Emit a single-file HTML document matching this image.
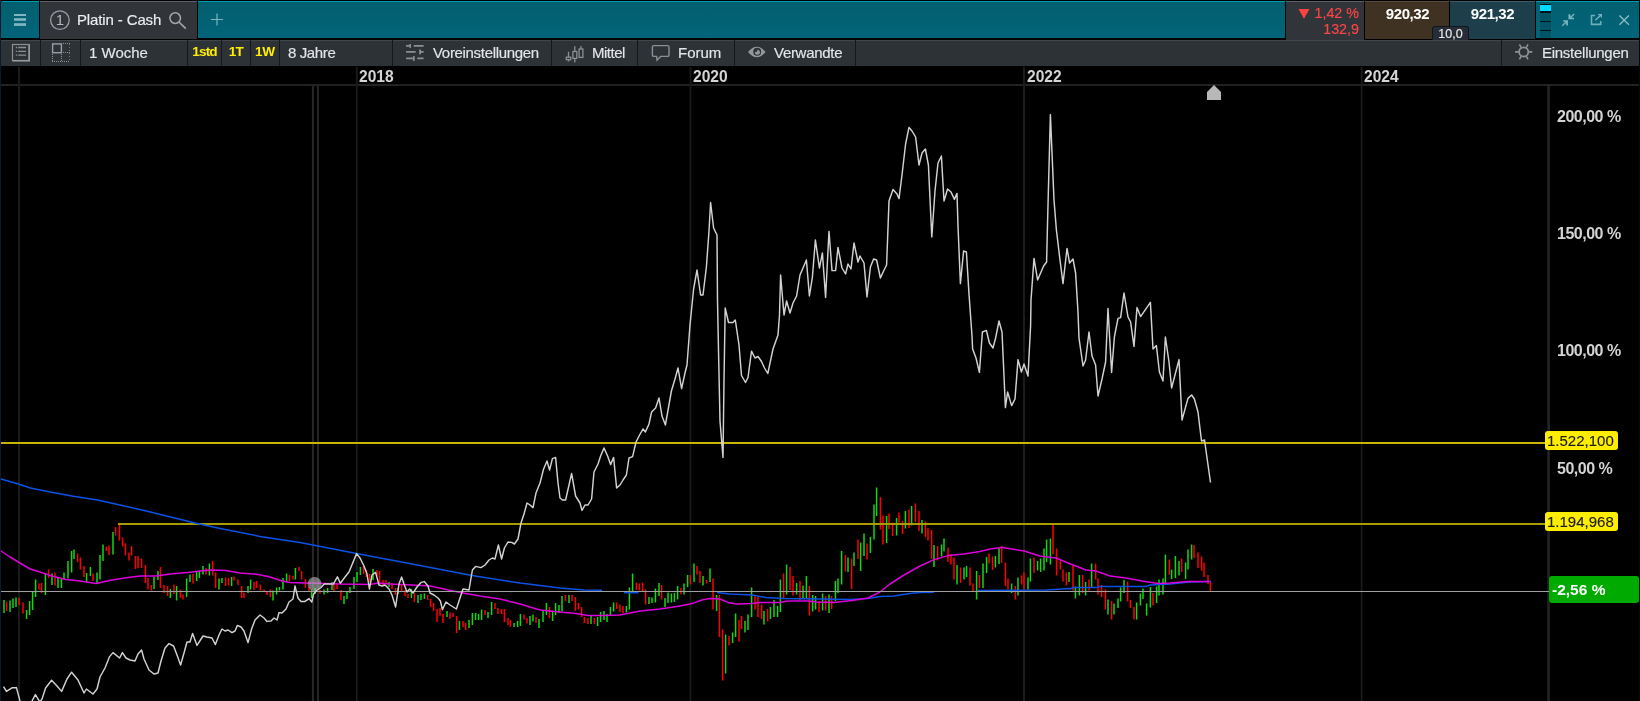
<!DOCTYPE html>
<html lang="de"><head><meta charset="utf-8"><title>Platin - Cash</title>
<style>
html,body{margin:0;padding:0;background:#000;}
body{width:1640px;height:701px;position:relative;overflow:hidden;font-family:"Liberation Sans",sans-serif;font-size:15px;color:#e4e6e8;}
.abs{position:absolute;box-sizing:border-box;}
.abs,.tag{will-change:transform;-webkit-text-stroke:0.15px currentColor;}
.lbl{will-change:transform;}
.chart{position:absolute;left:0;top:0;}
.teal{background:linear-gradient(#025f6e,#03647a);border-top:1px solid #0097b2;}
.dk{background:#31353a;border-top:1px solid #596169;}
.row2{background:#2d3237;border-top:1px solid #41464b;}
.cell{position:absolute;top:40px;height:26px;box-sizing:border-box;background:#2d3237;border-top:1px solid #41464b;white-space:nowrap;line-height:25px;}
.cell span{position:absolute;top:0;}
.y{color:#ffee00;font-weight:bold;font-size:13.6px;text-align:center;-webkit-text-stroke:0 !important;}
.lbl{position:absolute;font-weight:bold;color:#d4d4d4;font-size:15.6px;line-height:16px;white-space:nowrap;}
.ax{font-size:16px;letter-spacing:-0.5px;}
.tag{position:absolute;background:#ffee00;color:#1c1c1c;border-radius:3px;font-size:15px;line-height:19px;height:19px;box-sizing:border-box;white-space:nowrap;}
svg.ic{position:absolute;overflow:visible;}
</style></head><body>
<svg class="chart" width="1640" height="701" viewBox="0 0 1640 701">
<g fill="#222222" shape-rendering="crispEdges">
<rect x="1" y="84" width="1638" height="2"/>

</g>
<rect x="1547.3" y="86" width="2.6" height="615" fill="#232323"/>
<g fill="#1b1b1b">
<rect x="18" y="67" width="2.0" height="634"/>
<rect x="355.9" y="67" width="1.8" height="634"/>
<rect x="689.6" y="67" width="1.7" height="634"/>
<rect x="1023" y="67" width="2.0" height="634"/>
<rect x="1360.8" y="67" width="1.7" height="634"/>
</g>
<g fill="#282828"><rect x="311.900" y="86" width="2" height="615"/><rect x="317.100" y="86" width="1.800" height="615"/></g>
<g stroke-width="1.5" fill="none">
<path stroke="#12d812" d="M4.0 600.0V613.0M10.0 600.4V612.0M13.0 598.4V608.0M16.0 597.6V607.0M26.6 610.0V619.0M29.6 601.0V615.0M32.6 592.0V610.0M35.6 579.6V597.0M45.4 573.6V595.0M52.0 573.6V585.0M58.0 577.0V588.0M61.4 578.0V588.0M64.0 572.4V579.6M68.0 561.0V578.4M71.6 551.0V572.4M74.0 549.6V559.0M86.6 573.0V582.0M90.4 567.0V576.0M97.0 572.4V584.0M100.0 555.0V579.6M103.0 544.4V561.0M113.0 532.0V554.4M154.0 577.0V589.0M158.0 571.0V580.0M170.4 589.0V598.0M176.6 586.0V600.4M186.6 578.4V597.0M190.0 574.4V582.0M196.6 571.0V581.0M199.4 571.0V578.0M203.0 566.0V574.4M209.4 563.6V575.6M219.0 578.4V589.6M222.0 578.0V583.0M231.6 577.0V586.0M248.0 586.0V593.0M250.6 579.6V589.6M273.0 590.4V600.4M276.6 587.6V594.4M279.4 587.0V590.4M283.0 578.0V589.6M286.6 573.6V581.6M295.4 568.0V579.6M311.6 589.6V598.0M315.0 588.0V594.0M324.0 589.6V594.4M327.6 588.0V593.0M332.0 582.0V590.0M344.0 596.0V604.0M347.0 591.0V599.0M350.0 587.0V593.0M354.0 577.0V589.0M357.0 572.0V582.0M360.4 567.0V575.0M373.0 569.0V580.0M389.0 582.0V587.0M398.0 588.0V594.0M411.4 589.0V598.0M418.0 595.0V603.0M421.0 594.0V600.0M424.4 593.6V599.0M447.0 611.0V617.0M459.4 621.0V630.0M469.0 620.0V628.0M472.4 613.0V625.0M475.6 613.0V620.0M478.6 614.0V620.0M481.6 609.6V620.0M488.0 612.0V618.0M491.6 602.0V615.0M514.0 623.0V627.0M517.6 621.0V627.0M520.4 614.0V626.0M530.0 616.0V625.0M533.0 614.4V621.6M539.0 619.0V628.0M543.0 611.0V622.0M546.4 603.0V615.0M552.6 612.0V621.0M555.6 603.0V615.0M559.0 605.0V613.0M562.0 596.0V611.0M569.0 595.0V603.0M591.0 616.0V624.0M597.6 617.0V626.0M600.6 612.0V622.0M604.0 611.0V620.0M607.0 614.0V622.0M610.4 607.0V615.0M613.6 602.4V611.6M626.4 606.0V612.4M629.4 587.4V609.6M632.6 573.6V591.0M649.0 597.0V604.0M652.0 597.6V603.0M655.4 588.4V602.4M659.0 583.0V596.0M665.0 598.0V607.0M668.0 592.4V603.0M671.4 593.6V602.4M674.4 593.0V602.0M677.6 586.0V599.6M684.0 583.6V594.4M687.6 575.0V587.0M694.0 563.6V582.0M703.0 576.0V585.6M710.0 568.4V582.0M716.6 595.0V611.0M725.6 634.4V673.4M732.6 632.4V643.0M735.6 613.6V637.0M745.0 621.0V632.4M748.0 614.4V630.0M751.6 587.6V617.0M764.0 611.0V624.4M770.4 607.0V619.0M774.0 600.0V617.0M777.6 606.0V617.0M780.4 579.6V612.0M786.6 564.4V594.4M796.6 583.0V594.4M803.0 585.6V598.0M806.4 576.0V598.0M812.6 595.0V611.6M815.6 596.0V609.6M822.6 593.6V610.4M829.0 594.4V613.0M835.4 581.0V601.0M838.0 578.4V593.0M841.6 551.0V584.4M848.0 557.6V572.0M854.0 552.4V566.0M860.6 542.4V571.0M864.0 533.6V556.0M870.4 537.0V553.0M874.0 504.4V539.6M876.6 487.6V516.0M886.6 516.0V543.0M896.6 518.0V535.6M905.4 511.0V528.4M911.6 506.0V525.6M922.0 520.0V533.6M934.0 545.0V567.0M941.6 544.4V556.4M944.0 538.4V551.6M957.0 565.0V584.4M964.0 567.6V579.6M966.6 566.0V577.0M976.6 571.0V599.6M983.0 563.6V588.0M986.6 557.0V573.0M995.4 556.0V567.6M999.0 548.0V564.0M1011.6 583.6V593.0M1018.0 577.6V595.6M1028.0 577.6V589.6M1030.4 558.4V581.6M1037.6 561.0V570.4M1040.6 558.4V572.0M1044.0 548.4V570.4M1046.6 539.6V562.0M1050.4 538.4V564.4M1069.0 572.0V582.0M1075.4 586.4V598.4M1079.4 575.0V595.6M1085.6 582.0V595.6M1091.6 563.6V587.6M1108.0 599.6V614.4M1114.0 603.6V614.4M1118.0 598.4V608.0M1120.6 587.6V601.6M1124.0 580.0V593.0M1136.6 602.4V619.6M1140.4 593.6V605.6M1143.0 588.4V599.0M1146.6 603.6V615.6M1150.4 587.0V607.6M1156.6 586.4V603.0M1159.0 579.6V595.6M1163.0 578.4V594.4M1165.4 554.4V583.6M1171.6 569.6V579.0M1175.4 556.0V578.0M1179.0 561.0V575.6M1185.6 562.4V579.0M1188.0 549.6V569.6M1191.6 544.4V559.6"/>
<path stroke="#ff0000" d="M6.6 601.6V611.0M19.0 598.0V605.0M23.0 602.4V613.6M39.0 583.6V589.6M41.6 583.0V593.0M48.6 569.6V578.0M55.0 572.4V585.6M77.6 553.6V562.0M80.4 557.6V569.6M84.0 566.0V577.0M93.0 573.6V581.0M106.4 546.4V551.0M109.0 545.6V555.0M115.6 527.0V535.6M119.4 524.4V540.4M122.6 537.6V546.4M125.4 543.6V555.6M129.0 552.4V560.4M131.6 546.0V555.6M135.4 556.0V569.0M138.0 556.0V568.0M141.6 558.4V568.0M145.4 565.0V583.0M148.0 578.0V589.6M151.4 585.0V590.4M160.4 567.0V588.0M164.0 585.0V593.0M167.6 586.0V596.0M174.0 584.4V594.0M180.4 589.6V598.0M183.0 594.4V599.6M193.0 574.0V583.6M206.0 568.0V574.4M212.6 561.0V575.6M215.6 572.4V588.0M225.6 577.6V586.0M228.6 578.0V585.6M234.0 576.4V580.4M238.0 579.6V585.0M241.6 586.0V598.0M244.0 592.4V598.0M254.0 582.0V590.0M256.6 581.0V588.0M260.4 584.4V590.4M264.0 589.6V592.0M267.0 592.0V595.0M270.4 589.6V597.0M289.4 575.0V581.0M293.0 576.0V579.6M299.0 567.0V571.0M301.6 571.0V579.6M305.4 579.0V588.0M309.0 587.0V592.0M320.0 590.0V593.6M334.0 584.0V591.0M337.0 583.0V589.0M341.0 590.0V600.0M363.6 566.0V574.0M366.4 570.0V577.0M369.6 574.0V582.0M377.0 570.0V576.0M379.6 571.0V584.0M383.0 580.0V585.0M386.0 580.0V584.0M392.0 583.0V589.0M395.6 588.0V595.0M401.6 585.0V591.0M405.0 590.0V596.0M408.0 594.0V598.0M414.4 593.0V602.0M427.6 595.0V600.0M430.6 599.0V607.0M433.6 603.0V611.0M437.0 609.0V622.0M440.0 608.0V616.0M443.0 614.0V623.0M450.0 612.4V619.0M453.0 613.0V617.0M456.6 616.0V633.0M463.0 621.0V627.0M465.6 623.0V630.0M485.0 610.0V615.0M495.0 603.0V609.0M498.0 608.0V614.0M501.6 609.0V614.0M504.4 609.0V622.0M508.0 618.0V625.0M510.4 620.0V627.0M524.0 614.4V619.6M527.0 618.0V623.6M536.0 617.0V623.0M549.4 607.0V618.0M565.4 595.0V601.0M572.0 595.0V601.0M575.4 597.0V611.0M578.4 603.0V609.6M581.6 607.0V617.0M584.4 617.0V623.0M588.0 618.0V624.0M594.4 618.0V624.0M616.6 602.4V609.0M620.0 604.4V612.0M623.0 606.0V613.0M636.4 582.4V590.0M639.4 583.6V590.4M642.6 582.4V592.0M645.6 589.6V604.4M661.6 585.0V599.6M681.0 588.0V594.4M690.4 575.0V584.4M697.0 566.0V574.4M700.0 571.0V583.0M706.6 580.0V583.6M713.0 578.4V609.6M719.4 595.0V637.0M722.6 629.6V680.6M729.0 636.0V645.6M739.0 620.0V641.6M741.6 616.0V629.0M755.0 595.0V609.6M758.0 597.0V617.0M761.6 604.4V619.0M767.6 609.0V621.6M783.6 573.6V598.0M790.0 567.0V590.0M793.0 576.0V595.6M800.0 581.0V600.0M809.4 586.0V615.6M819.0 601.0V612.0M825.6 596.0V610.4M831.6 596.0V609.0M845.4 555.0V571.6M851.6 558.4V589.0M858.0 539.6V559.0M867.0 543.6V559.6M880.4 497.0V529.6M883.0 515.6V544.4M889.0 513.6V529.0M892.6 522.4V536.0M899.0 512.4V522.4M902.6 521.0V534.0M909.0 509.6V528.0M915.4 503.6V522.0M919.0 511.0V531.0M925.4 521.6V537.0M928.0 528.0V540.4M931.6 530.0V559.0M937.6 546.0V560.4M948.0 547.6V562.0M951.0 554.0V564.4M954.0 557.6V579.6M960.6 567.6V583.0M970.0 567.6V585.6M973.0 583.6V591.0M979.4 575.0V588.0M989.0 553.6V563.6M992.6 556.4V570.0M1001.6 546.0V563.0M1005.4 562.4V586.0M1008.0 578.4V589.6M1015.4 586.0V599.6M1021.6 575.6V584.4M1024.0 572.4V589.6M1034.0 557.6V573.0M1053.0 524.4V554.0M1056.6 548.4V575.6M1060.4 560.4V569.6M1063.0 569.6V581.6M1066.4 572.4V585.6M1073.0 565.6V590.4M1082.6 575.0V593.0M1089.0 579.6V590.4M1095.6 563.6V579.6M1098.0 578.4V594.4M1101.6 585.0V597.0M1105.4 589.6V609.6M1111.6 601.0V619.6M1127.6 581.6V601.6M1130.4 600.0V608.0M1134.0 607.0V619.6M1153.0 593.0V605.6M1169.4 559.6V575.0M1181.6 558.4V572.0M1194.0 545.0V558.0M1198.0 552.4V568.0M1201.6 556.4V570.4M1204.0 562.4V577.0M1208.0 575.0V584.0M1210.4 581.0V591.0"/>
</g>
<g shape-rendering="crispEdges"><rect x="0" y="442" width="1547" height="2" fill="#c8b400"/><rect x="118" y="523" width="1429" height="2" fill="#a89c00"/></g>
<g fill="none" stroke="#0a52e6" stroke-width="1.5" stroke-linejoin="round">
<polyline points="1.0,479.0 18.3,484.0 30.5,488.0 48.8,491.7 73.2,496.2 97.6,499.9 122.0,505.4 146.3,510.9 170.7,517.0 195.1,523.0 220.0,528.4 260.0,536.4 300.0,542.4 356.6,553.6 412.0,564.0 472.0,575.6 520.0,583.0 560.0,588.0 584.0,590.0 602.0,590.2"/>
<polyline points="624.0,592.7 638.5,592.7"/>
<polyline points="717.0,592.4 730.0,594.0 752.0,595.0 766.0,597.6 784.0,598.6 820.0,599.0 850.0,599.4 868.0,598.4 880.0,596.4 894.0,596.0 910.0,593.6 920.0,592.4 934.0,592.3"/>
<polyline points="978.0,590.6 1046.0,590.0 1070.0,588.4 1070.0,589.0 1073.0,587.6 1096.0,587.6 1100.0,586.4 1146.0,586.4 1150.0,585.0 1170.0,584.0 1190.0,582.0 1211.0,581.6"/>
</g>
<polyline fill="none" stroke="#dc00dc" stroke-width="1.5" stroke-linejoin="round" points="0.0,549.0 1.0,551.0 10.0,557.0 20.0,563.0 30.0,569.0 40.0,572.0 52.0,576.0 66.0,579.6 80.0,581.0 96.0,583.6 112.0,580.0 128.0,577.6 140.0,576.0 156.0,576.0 170.0,574.0 188.0,572.6 200.0,571.0 212.0,570.0 226.0,570.4 240.0,573.0 258.0,574.4 270.0,577.0 282.0,581.0 290.0,582.6 304.0,583.0 312.0,583.0 340.0,584.0 370.0,584.4 378.0,583.0 390.0,584.0 412.0,585.0 430.0,586.0 444.0,589.0 460.0,592.4 480.0,596.0 500.0,599.0 520.0,604.0 540.0,610.0 560.0,612.0 576.0,613.6 588.0,615.6 604.0,615.6 620.0,615.0 640.0,611.0 660.0,609.0 680.0,606.0 692.0,603.6 702.0,600.0 710.0,598.6 720.0,599.0 728.0,602.4 736.0,604.0 752.0,603.6 760.0,602.6 780.0,602.6 788.0,601.0 808.0,601.0 816.0,602.0 834.0,602.4 852.0,600.4 868.0,598.0 880.0,592.0 890.0,584.0 904.0,575.0 920.0,566.0 934.0,559.6 948.0,555.6 964.0,554.0 980.0,551.6 990.0,549.0 1002.0,547.6 1012.0,549.0 1024.0,551.0 1040.0,556.0 1056.0,558.0 1068.0,563.0 1068.0,563.0 1086.0,570.0 1096.0,571.0 1110.0,576.0 1126.0,578.0 1142.0,581.0 1158.0,583.6 1170.0,583.0 1188.0,581.6 1210.0,581.6"/>
<rect x="0" y="591" width="1549" height="1" fill="#a0a0a0" shape-rendering="crispEdges"/>
<polyline fill="none" stroke="#d2d2d2" stroke-width="1.45" stroke-linejoin="round" points="3.6,686.6 6.4,691.4 12.0,687.8 16.4,687.6 20.0,701.0 24.0,713.0 28.0,709.0 32.0,701.0 35.4,694.6 38.0,699.0 40.0,702.0 42.0,699.0 45.6,688.0 51.6,680.2 57.0,686.0 61.6,691.4 67.0,679.0 71.6,672.2 78.0,680.0 84.0,693.0 86.4,689.0 93.0,694.0 97.0,689.0 100.0,677.0 105.0,668.0 109.6,656.6 113.0,652.6 119.6,658.0 122.4,652.6 126.0,658.0 130.0,660.0 135.0,661.0 138.0,654.0 141.6,650.0 144.0,659.0 149.0,670.0 154.0,674.0 158.0,673.0 161.0,661.0 165.0,648.0 169.0,643.6 173.6,646.0 177.0,655.0 180.6,665.0 184.0,653.0 187.0,642.0 190.0,642.0 192.6,633.4 197.0,645.4 203.0,636.0 207.0,637.0 212.0,638.0 215.4,644.6 219.0,635.0 222.0,629.0 225.0,631.0 228.0,630.0 232.0,632.6 235.0,631.0 237.4,625.4 241.0,627.0 244.0,631.0 248.0,642.6 251.6,629.0 255.0,620.0 260.0,615.0 264.0,618.0 267.0,621.4 271.0,621.0 274.0,618.0 277.0,620.0 279.0,612.6 282.0,613.0 286.0,609.0 289.0,602.0 293.0,599.0 295.0,586.0 298.0,598.0 301.0,601.4 305.0,601.4 309.0,598.6 311.8,602.1 313.5,594.2 316.5,590.5 319.0,589.0 321.0,587.5 324.2,583.9 333.5,583.9 337.4,576.8 340.3,583.2 345.0,577.0 349.0,572.0 356.6,553.6 360.0,558.0 364.0,566.0 367.0,574.0 369.4,589.0 372.0,575.0 375.6,572.4 379.0,585.0 382.0,586.0 385.0,585.0 389.0,589.0 392.0,595.0 395.6,607.0 399.0,584.0 401.6,577.0 404.0,584.0 407.0,592.0 409.6,589.0 413.0,593.0 417.0,587.0 421.0,582.4 424.4,581.6 428.0,586.0 430.0,593.0 434.0,595.0 438.0,598.0 440.4,601.0 442.4,609.6 446.0,602.0 450.0,605.0 456.4,609.0 460.0,598.0 463.0,589.0 469.0,590.0 472.4,570.0 475.6,566.4 481.0,567.6 485.0,565.0 489.0,560.0 492.4,558.0 495.0,559.0 498.4,545.0 501.6,559.0 504.4,548.0 508.0,542.0 511.6,542.4 514.4,544.0 518.0,539.0 521.0,523.0 524.0,514.0 527.0,503.0 530.0,505.0 533.0,507.6 536.0,493.0 540.0,483.0 543.6,469.0 547.0,461.0 549.6,470.0 552.4,458.6 555.6,457.4 558.0,483.0 560.0,498.0 562.4,500.0 565.6,500.0 569.0,485.0 571.6,473.4 575.6,496.0 580.0,503.0 582.0,510.4 585.0,505.0 588.0,505.0 591.6,499.0 594.0,472.0 598.0,464.0 600.6,456.0 604.0,448.0 607.6,456.0 610.6,464.6 613.6,457.4 616.6,488.0 620.0,485.0 623.0,480.0 626.4,475.0 629.0,458.0 632.6,456.6 636.0,442.0 639.6,435.0 643.0,429.0 645.4,432.0 649.0,424.0 651.6,412.0 655.6,408.0 659.0,398.0 662.0,416.0 665.4,425.0 668.4,408.0 671.4,391.0 675.0,379.0 678.0,368.0 681.6,388.6 685.0,373.0 687.0,365.0 690.0,325.0 693.6,289.0 697.0,270.0 700.6,295.0 703.0,295.0 706.4,267.0 709.0,231.0 710.6,202.6 713.6,228.0 717.0,235.0 717.5,300.0 718.5,350.0 720.0,421.0 723.0,457.4 724.0,380.0 724.5,350.0 725.2,308.0 728.5,322.5 733.0,322.5 735.2,320.0 735.6,322.0 739.0,345.0 741.5,375.5 745.5,382.5 748.0,377.5 751.5,351.2 755.0,358.0 758.0,356.5 761.5,361.5 764.5,368.0 767.8,373.5 773.0,349.0 778.0,335.0 779.5,315.0 780.6,275.0 784.0,315.0 786.6,301.0 790.0,313.0 793.0,303.0 796.6,296.0 800.0,275.0 803.0,268.0 806.4,260.0 809.4,296.0 812.4,277.0 815.4,240.0 819.4,268.0 822.4,253.0 825.6,297.4 829.0,231.4 832.0,270.6 835.6,270.6 838.0,247.4 842.0,268.0 845.6,274.0 848.0,264.0 851.0,269.0 854.0,243.0 858.0,262.0 860.0,256.0 864.0,263.0 867.0,297.0 870.4,267.0 873.6,259.0 876.6,260.0 880.4,278.0 883.6,271.0 886.6,265.0 889.0,201.0 893.0,189.4 897.0,194.0 899.0,198.6 902.0,175.0 905.6,144.0 909.0,127.4 912.0,131.0 915.6,137.0 919.0,165.0 922.0,153.0 925.4,149.0 928.4,165.0 931.8,237.0 935.0,191.0 938.0,163.0 941.4,156.0 944.0,201.0 947.6,189.0 951.0,192.0 954.4,199.4 957.0,193.4 958.0,226.0 960.4,283.6 963.6,251.0 966.4,252.0 969.0,294.0 972.0,336.0 972.6,349.0 976.0,358.0 979.4,372.4 982.4,332.0 986.4,330.4 989.4,343.0 993.0,348.0 995.6,338.0 999.0,321.0 1002.0,332.0 1004.0,376.0 1005.4,407.6 1007.6,392.0 1011.6,405.6 1015.0,399.0 1018.0,359.6 1021.4,372.0 1024.0,364.0 1028.0,376.0 1030.6,326.0 1031.0,300.0 1034.0,258.4 1037.6,280.0 1043.6,266.0 1046.6,262.0 1047.6,220.0 1050.4,114.6 1054.0,200.0 1056.4,230.0 1060.0,260.0 1063.0,283.6 1067.0,248.4 1069.6,263.0 1073.0,259.0 1075.6,273.0 1078.0,312.0 1079.0,338.0 1083.0,366.0 1085.6,360.0 1089.0,332.0 1092.0,356.0 1095.6,365.0 1098.0,396.0 1102.0,379.0 1105.6,362.0 1108.0,308.4 1111.6,372.4 1114.4,337.0 1118.0,318.4 1120.6,317.6 1124.0,293.0 1128.0,317.0 1130.6,322.0 1134.0,346.4 1137.0,307.6 1140.6,316.6 1150.4,302.4 1153.0,349.0 1156.4,345.6 1159.4,372.0 1163.0,381.0 1165.4,337.0 1169.0,362.0 1171.6,388.0 1179.0,359.6 1182.0,420.0 1188.0,398.4 1191.6,395.0 1194.4,399.0 1198.0,412.0 1201.5,441.0 1204.5,440.0 1210.5,482.5"/>
<circle cx="314.600" cy="584" r="7" fill="#b4b4b4" opacity="0.62"/>
<path d="M1207 100V92L1214 85L1221 92V100Z" fill="#b8b8b8"/>
</svg>
<!-- top bar -->
<div class="abs teal" style="left:1px;top:1px;width:38px;height:37px;border-radius:2px 0 0 0;"></div>
<div class="abs dk" style="left:40px;top:1px;width:157px;height:38px;"></div>
<div class="abs teal" style="left:198px;top:1px;width:1087px;height:37px;"></div>
<div class="abs dk" style="left:1286px;top:1px;width:78px;height:39px;"></div>
<div class="abs" style="left:1365px;top:1px;width:84px;height:38px;background:#3f3222;border-top:1px solid #5a4c3a;"></div>
<div class="abs" style="left:1450px;top:1px;width:85px;height:38px;background:#1c3f4b;border-top:1px solid #3b5c68;"></div>
<div class="abs teal" style="left:1536px;top:1px;width:103px;height:37px;"></div>
<!-- hamburger -->
<svg class="ic" style="left:0;top:0" width="40" height="40"><g fill="#80b6bf"><rect x="14" y="14" width="12" height="2"/><rect x="14" y="18.200" width="12" height="2.600"/><rect x="14" y="23.200" width="12" height="2.700"/></g></svg>
<!-- tab content -->
<svg class="ic" style="left:40px;top:0" width="160" height="40"><circle cx="19.9" cy="20.1" r="9.3" fill="none" stroke="#9a9ea2" stroke-width="1.3"/>
<text x="19.9" y="25.4" text-anchor="middle" font-size="15" fill="#b4b8bc" font-family="Liberation Sans, sans-serif">1</text>
<circle cx="135.2" cy="18.1" r="5.3" fill="none" stroke="#a4a8ac" stroke-width="1.5"/><path d="M139.2 22.2L145.8 28.6" stroke="#a4a8ac" stroke-width="1.6" fill="none"/></svg>
<div class="abs" style="left:77px;top:11px;line-height:17px;font-size:15px;color:#eceeef;white-space:nowrap;letter-spacing:-0.13px;">Platin - Cash</div>
<!-- plus -->
<svg class="ic" style="left:198px;top:0" width="40" height="40"><path d="M13 19.5H25M19 13.5V25.5" stroke="#7fb4be" stroke-width="1.2" fill="none"/></svg>
<!-- change cell -->
<div class="abs" style="left:1286px;top:4px;width:73px;text-align:right;color:#fb4646;font-size:14.3px;line-height:18px;white-space:nowrap;transform:scaleY(1.07);transform-origin:50% 85%;">1,42 %</div><div class="abs" style="left:1286px;top:21px;width:73px;text-align:right;color:#fb4646;font-size:14.3px;line-height:16px;white-space:nowrap;">132,9</div>
<svg class="ic" style="left:1286px;top:0" width="40" height="40"><path d="M12.6 9H23.4L18 18.7Z" fill="#ff4242"/></svg>
<div class="abs" style="left:1365px;top:5px;width:85px;text-align:center;font-weight:bold;font-size:15px;letter-spacing:-0.4px;-webkit-text-stroke:0;line-height:18px;color:#fff;">920,32</div>
<div class="abs" style="left:1450px;top:5px;width:85px;text-align:center;font-weight:bold;font-size:15px;letter-spacing:-0.4px;-webkit-text-stroke:0;line-height:18px;color:#fff;">921,32</div>
<div class="abs" style="left:1432px;top:26px;width:37px;height:14px;background:#262d37;border:1px solid #12161c;border-bottom:none;border-radius:3px 3px 0 0;text-align:center;font-size:12.5px;line-height:14px;color:#e8e8e8;">10,0</div>
<!-- signal bars -->
<svg class="ic" style="left:1536px;top:0" width="104" height="40" shape-rendering="crispEdges"><rect x="4" y="4" width="11" height="34" fill="#015463"/><rect x="4" y="4" width="11" height="1" fill="#00141a"/><rect x="4" y="5" width="11" height="6" fill="#00dcff"/><rect x="4" y="11" width="11" height="2" fill="#00141a"/><rect x="4" y="21" width="11" height="1" fill="#00141a"/><rect x="4" y="30" width="11" height="1" fill="#00141a"/></svg>
<svg class="ic" style="left:1536px;top:0" width="104" height="40" fill="none" stroke="#79b6c0" stroke-width="1.5">
<path d="M33.300 14.300V18.500H38" stroke-width="1.700"/><path d="M33.600 18.200L38.200 14" stroke-width="1.300"/><path d="M33.400 14.600V18.400H37.600Z" fill="#79b6c0" stroke="none" opacity=".55"/>
<path d="M27.300 21H31.100V25.400" stroke-width="1.700"/><path d="M30.800 21.300L26.300 25.800" stroke-width="1.300"/><path d="M27.600 21.100H31V24.900Z" fill="#79b6c0" stroke="none" opacity=".55"/>
<path d="M59 15.500H55.500V24.400H64.700V20.900" stroke-width="1.600" stroke="#6fafba"/><path d="M59.300 20.300L65 15" stroke-width="1.300"/><path d="M62.300 14.700H65.300V17.600" stroke-width="1.200"/>
<path d="M83.400 15.500L92.900 24.700M92.900 15.500L83.400 24.700" stroke-width="1.300" stroke="#86c0c9"/></svg>
<!-- row 2 -->
<div class="abs row2" style="left:1px;top:40px;width:1638px;height:26px;"></div>
<div class="abs" style="left:40px;top:40px;width:1px;height:26px;background:#15181b;"></div>
<div class="abs" style="left:80px;top:40px;width:1px;height:26px;background:#15181b;"></div>
<div class="abs" style="left:187px;top:40px;width:1px;height:26px;background:#15181b;"></div>
<div class="abs" style="left:221px;top:40px;width:1px;height:26px;background:#15181b;"></div>
<div class="abs" style="left:250px;top:40px;width:1px;height:26px;background:#15181b;"></div>
<div class="abs" style="left:279px;top:40px;width:1px;height:26px;background:#15181b;"></div>
<div class="abs" style="left:392px;top:40px;width:1px;height:26px;background:#15181b;"></div>
<div class="abs" style="left:551px;top:40px;width:1px;height:26px;background:#15181b;"></div>
<div class="abs" style="left:637px;top:40px;width:1px;height:26px;background:#15181b;"></div>
<div class="abs" style="left:734px;top:40px;width:1px;height:26px;background:#15181b;"></div>
<div class="abs" style="left:855px;top:40px;width:1px;height:26px;background:#15181b;"></div>
<div class="abs" style="left:1501px;top:40px;width:1px;height:26px;background:#15181b;"></div>
<!-- row 2 texts -->
<div class="abs t2" style="left:89px;top:44px;line-height:17px;white-space:nowrap;">1 Woche</div>
<div class="abs y" style="left:188px;top:44px;width:33px;line-height:16px;letter-spacing:-0.85px;">1std</div>
<div class="abs y" style="left:222px;top:44px;width:28px;line-height:16px;letter-spacing:-0.8px;">1T</div>
<div class="abs y" style="left:251px;top:44px;width:28px;line-height:16px;letter-spacing:-0.3px;">1W</div>
<div class="abs t2" style="left:287.5px;top:44px;line-height:17px;white-space:nowrap;letter-spacing:-0.38px;">8 Jahre</div>
<div class="abs t2" style="left:433.3px;top:44px;line-height:17px;white-space:nowrap;letter-spacing:-0.32px;">Voreinstellungen</div>
<div class="abs t2" style="left:591.8px;top:44px;line-height:17px;white-space:nowrap;letter-spacing:-0.5px;">Mittel</div>
<div class="abs t2" style="left:678px;top:44px;line-height:17px;white-space:nowrap;">Forum</div>
<div class="abs t2" style="left:773.6px;top:44px;line-height:17px;white-space:nowrap;letter-spacing:-0.3px;">Verwandte</div>
<div class="abs t2" style="left:1542px;top:44px;line-height:17px;white-space:nowrap;letter-spacing:-0.27px;">Einstellungen</div>
<!-- row 2 icons -->
<svg class="ic" style="left:0;top:40px" width="900" height="26" fill="none" stroke="#8c9094" stroke-width="1.2">
<rect x="12.500" y="4.500" width="16.500" height="16"/><path d="M29.300 4.500V20.800H12.500" stroke-width="1.300" stroke="#9a9ea2"/><path d="M15.800 7.500H17.200M18.200 7.500H26M15.800 11.300H17.200M18.200 11.300H26M15.800 15.100H17.200M18.200 15.100H26" stroke-width="1.300"/>
<rect x="52.600" y="3.900" width="8.800" height="8.800" stroke-width="1.400" stroke="#9a9ea2"/><g shape-rendering="crispEdges"><path d="M63 3.500H70M63 12.500H70M52 21.500H70M52.500 14V22M61.500 14V22" stroke-dasharray="1 1" stroke="#8c9094" stroke-width="1"/><path d="M69.500 4V22" stroke-dasharray="1 2" stroke="#6c7074" stroke-width="1"/></g>
<g stroke="#8c9094" stroke-width="1.800"><path d="M406.100 5.900H409.500M413.800 5.900H423.600M406.100 11.950H415.700M421 11.950H423.600M406.100 18.300H412.800M417.200 18.300H423.600"/></g>
<g fill="#8c9094" stroke="none"><rect x="409.300" y="4" width="1.700" height="3.800"/><rect x="419.200" y="9.500" width="1.800" height="4.800"/><rect x="412.900" y="16.100" width="1.800" height="4.700"/></g>
<g stroke="#8c9094" stroke-width="1.300"><path d="M568.500 11.700V21.600M574.800 6.300V22.500M580.900 6V9"/><rect x="566.300" y="17.200" width="4.400" height="2.500" fill="#2d3237"/><rect x="572.900" y="11.500" width="3.900" height="6.900" fill="#2d3237"/><rect x="579.100" y="9" width="3.800" height="8.400" fill="#2d3237"/></g>
<path d="M654 5.600H667.500Q669 5.600 669 7.100V14.900Q669 16.400 667.500 16.400H660.600L657 20.200L656.600 16.400H654Q652.400 16.400 652.400 14.900V7.100Q652.400 5.600 654 5.600Z" stroke="#8c9094" stroke-width="1.400"/>
</svg>
<svg class="ic" style="left:735px;top:40px" width="60" height="26"><path d="M13 12Q21.800 1.500 30.600 12Q21.800 22.500 13 12Z" fill="#94989c"/><circle cx="22.200" cy="11.800" r="4" fill="#2d3237"/><circle cx="22.400" cy="12.200" r="2.500" fill="#94989c"/><circle cx="20.900" cy="10.600" r="1.500" fill="#2d3237"/></svg>
<svg class="ic" style="left:1502px;top:40px" width="40" height="26" fill="none" stroke="#8e9296" stroke-width="1.800"><circle cx="21.7" cy="11.9" r="4.600"/><path d="M26.70 11.90L30.30 11.90M24.20 16.23L26.00 19.35M19.20 16.23L17.40 19.35M16.70 11.90L13.10 11.90M19.20 7.57L17.40 4.45M24.20 7.57L26.00 4.45" stroke-width="1.600"/></svg>
<!-- time axis labels -->
<div class="lbl" style="left:359px;top:69px;">2018</div>
<div class="lbl" style="left:693px;top:69px;">2020</div>
<div class="lbl" style="left:1027px;top:69px;">2022</div>
<div class="lbl" style="left:1364px;top:69px;">2024</div>
<!-- y axis labels -->
<div class="lbl ax" style="left:1557px;top:109px;">200,00 %</div>
<div class="lbl ax" style="left:1557px;top:226px;">150,00 %</div>
<div class="lbl ax" style="left:1557px;top:343px;">100,00 %</div>
<div class="lbl ax" style="left:1557px;top:461px;">50,00 %</div>
<div class="tag" style="left:1544.5px;top:431px;width:73px;padding-left:2px;">1.522,100</div>
<div class="tag" style="left:1544.5px;top:512px;width:73px;padding-left:2px;">1.194,968</div>
<div class="abs" style="left:1549px;top:576px;width:90px;height:27px;background:#00aa00;border-radius:3px;color:#fff;font-weight:bold;font-size:15.5px;-webkit-text-stroke:0;line-height:28px;padding-left:3px;white-space:nowrap;">-2,56 %</div>
<!-- frame edges -->
<div class="abs" style="left:0;top:0;width:1px;height:701px;background:#0a1a2a;"></div>
<div class="abs" style="left:1639px;top:0;width:1px;height:701px;background:#050a10;"></div>
</body></html>
